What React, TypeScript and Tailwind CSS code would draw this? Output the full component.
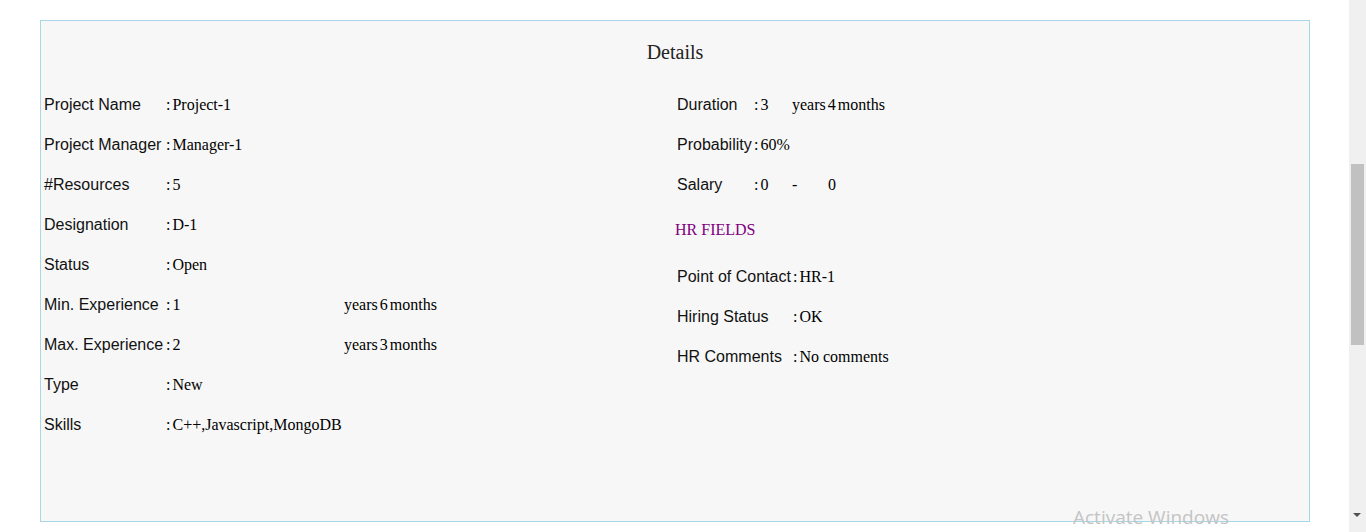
const sans = { fontFamily: '"Liberation Sans", Arial, sans-serif' }

function Value({ children }: { children: string }) {
  return (
    <>
      <span>:</span>
      <span className="ml-[2px]">{children}</span>
    </>
  )
}

function Row({ label, value, extra, labelW, valueW }: { label: string; value: string; extra?: string; labelW: string; valueW: string }) {
  return (
    <div className="flex h-10 items-center pt-[2px]">
      <div className={`${labelW} shrink-0 text-[16px] text-[#111]`} style={sans}>{label}</div>
      <div className={`${valueW} shrink-0 text-[16px]`}><Value>{value}</Value></div>
      {extra && <div className="text-[16px] [word-spacing:-2px]">{extra}</div>}
    </div>
  )
}

function App() {
  return (
    <div className="flex h-[532px] w-full overflow-hidden bg-white text-black" style={{ fontFamily: '"Liberation Serif", "Times New Roman", serif' }}>
      <div className="relative flex-1 pl-10 pr-[39px] pt-5">
        <div className="h-[502px] border border-[#a6d8e8] bg-[#f7f7f7]">
          <div className="flex h-[63px] items-center justify-center pb-[2px] text-[20px] text-[#222]">Details</div>
          <div className="flex">
            <div className="w-1/2 pl-[3px]">
              <Row label="Project Name" value="Project-1" labelW="w-[122px]" valueW="w-[178px]" />
              <Row label="Project Manager" value="Manager-1" labelW="w-[122px]" valueW="w-[178px]" />
              <Row label="#Resources" value="5" labelW="w-[122px]" valueW="w-[178px]" />
              <Row label="Designation" value="D-1" labelW="w-[122px]" valueW="w-[178px]" />
              <Row label="Status" value="Open" labelW="w-[122px]" valueW="w-[178px]" />
              <Row label="Min. Experience" value="1" extra="years 6 months" labelW="w-[122px]" valueW="w-[178px]" />
              <Row label="Max. Experience" value="2" extra="years 3 months" labelW="w-[122px]" valueW="w-[178px]" />
              <Row label="Type" value="New" labelW="w-[122px]" valueW="w-[178px]" />
              <Row label="Skills" value="C++,Javascript,MongoDB" labelW="w-[122px]" valueW="w-[178px]" />
            </div>
            <div className="w-1/2">
              <div className="pl-[2px]">
                <Row label="Duration" value="3" extra="years 4 months" labelW="w-[77px]" valueW="w-[38px]" />
                <Row label="Probability" value="60%" labelW="w-[77px]" valueW="w-[38px]" />
                <div className="flex h-10 items-center pt-[2px] text-[16px]">
                  <div className="w-[77px] shrink-0 text-[#111]" style={sans}>Salary</div>
                  <div className="w-[38px] shrink-0"><Value>0</Value></div>
                  <div className="w-[36px] shrink-0">-</div>
                  <div>0</div>
                </div>
              </div>
              <div className="flex h-[52px] items-center text-[16px] text-[#800080]">HR FIELDS</div>
              <div className="pl-[2px]">
                <Row label="Point of Contact" value="HR-1" labelW="w-[116px]" valueW="w-[178px]" />
                <Row label="Hiring Status" value="OK" labelW="w-[116px]" valueW="w-[178px]" />
                <Row label="HR Comments" value="No comments" labelW="w-[116px]" valueW="w-[178px]" />
              </div>
            </div>
          </div>
        </div>
        <div className="absolute left-[1073px] top-[503px] text-[19px] text-[#c4c4c4]" style={{ fontFamily: '"Open Sans", sans-serif' }}>Activate Windows</div>
      </div>
      <div className="relative w-[17px] shrink-0 bg-[#f0f0f0]">
        <div className="absolute left-[2px] top-[164px] h-[181px] w-[13px] bg-[#c1c1c1]" />
        <div className="absolute left-[4px] top-[513px] h-0 w-0 border-x-[4px] border-t-[4px] border-x-transparent border-t-[#505050]" />
      </div>
    </div>
  )
}

export default App
